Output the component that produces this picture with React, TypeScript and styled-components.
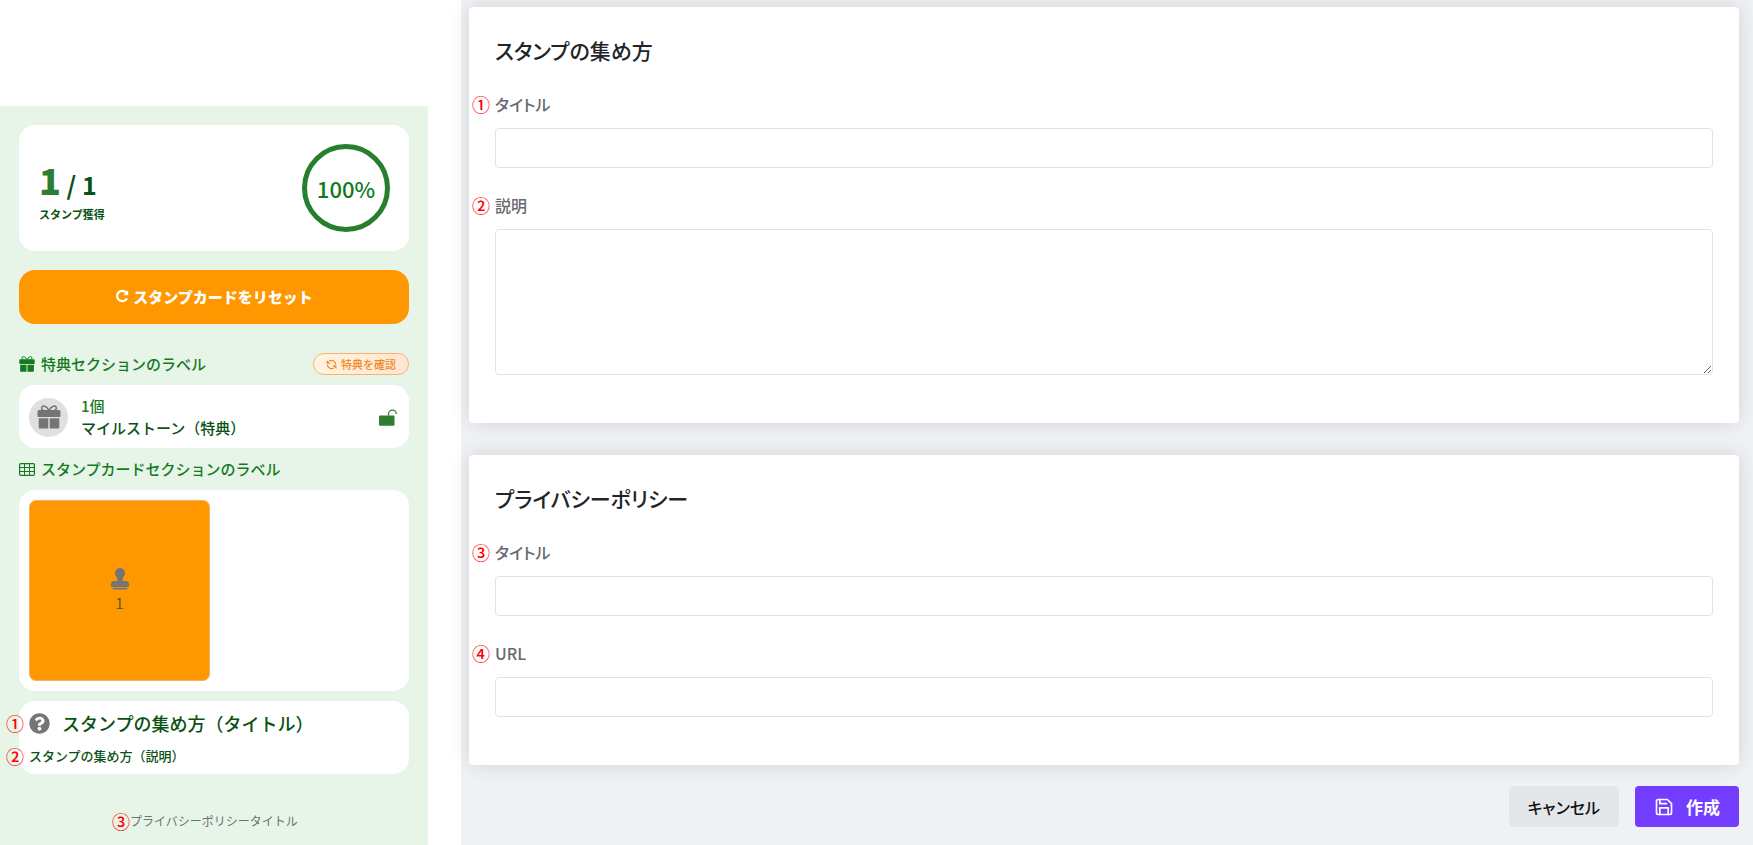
import React from "react";
import styled, { createGlobalStyle } from "styled-components";
import { FiSave } from "react-icons/fi";
import { FaQuestionCircle } from "react-icons/fa";

const GlobalStyle = createGlobalStyle`
  *, *::before, *::after { box-sizing: border-box; }
  body {
    margin: 0;
    background: #fff;
    font-family: "Noto Sans CJK JP", "Noto Sans", sans-serif;
  }
  h2, p { margin: 0; }
  button, input, textarea { font: inherit; }
`;

const Page = styled.div`
  display: flex;
  min-height: 100vh;
`;

/* ---------- shared ---------- */

const Marker = styled.span<{ $left: number }>`
  position: absolute;
  top: 50%;
  left: ${(p) => p.$left}px;
  transform: translateY(-50%);
  font-size: 18px;
  line-height: 18px;
  font-weight: 500;
  color: #ff0000;
`;

/* ---------- preview ---------- */

const Preview = styled.aside`
  flex: 0 0 428px;
  display: flex;
  flex-direction: column;
  margin-top: 106px;
  padding: 19px 19px 12px;
  background: #e6f5e8;
  color: #0a5214;
`;

const Card = styled.section`
  border-radius: 16px;
  background: #fff;
`;

const ProgressCard = styled(Card)`
  display: flex;
  align-items: center;
  justify-content: space-between;
  padding: 19px 19px 19px 20px;
`;

const Progress = styled.div`
  padding-top: 4px;
`;

const Count = styled.p`
  font-size: 25px;
  line-height: 40px;
  font-weight: 700;
`;

const CountNow = styled.span`
  font-size: 36px;
  font-weight: 900;
  color: #2e7d32;
`;

const CountLabel = styled.p`
  margin-top: 2px;
  font-size: 11px;
  line-height: 16px;
  font-weight: 700;
`;

const Ring = styled.div`
  display: grid;
  place-items: center;
  width: 88px;
  height: 88px;
  border: 5px solid #267f2d;
  border-radius: 50%;
  font-size: 22px;
  font-weight: 500;
  color: #127a1a;
`;

const ResetButton = styled.button`
  display: flex;
  align-items: center;
  justify-content: center;
  gap: 4px;
  height: 54px;
  margin-top: 19px;
  padding: 0 0 2px;
  border: 0;
  border-radius: 16px;
  background: #ff9800;
  color: #fff;
  font-size: 15px;
  font-weight: 900;
`;

const SectionHead = styled.div<{ $gap: number }>`
  display: flex;
  align-items: center;
  justify-content: space-between;
  height: 22px;
  margin-top: ${(p) => p.$gap}px;
`;

const SectionTitle = styled.h2`
  display: flex;
  align-items: center;
  gap: 6px;
  font-size: 15px;
  line-height: 22px;
  font-weight: 500;
  color: #157a1e;
`;

const Pill = styled.button`
  display: flex;
  align-items: center;
  gap: 4px;
  height: 22px;
  padding: 0 12px;
  border: 1px solid #fdb366;
  border-radius: 11px;
  background: linear-gradient(90deg, #fff3e0, #ffe6d3);
  color: #f28a24;
  font-size: 11px;
  line-height: 20px;
  font-weight: 500;
`;

const RewardCard = styled(Card)`
  display: flex;
  align-items: center;
  gap: 13px;
  margin-top: 10px;
  padding: 10px 12px 9px 10px;
`;

const RewardIcon = styled.div`
  display: grid;
  place-items: center;
  width: 39px;
  height: 39px;
  border-radius: 50%;
  background: #e0e0e0;
  color: #757575;
`;

const RewardText = styled.div`
  flex: 1;
  font-size: 15px;
  line-height: 22px;
  font-weight: 500;
`;

const RewardCount = styled.p`
  color: #1e7a27;
`;

const StampCard = styled(Card)`
  display: grid;
  grid-template-columns: 1fr 1fr;
  gap: 8px;
  margin-top: 10px;
  padding: 10px;
`;

const StampTile = styled.div`
  display: flex;
  flex-direction: column;
  align-items: center;
  justify-content: center;
  gap: 2px;
  aspect-ratio: 1;
  border: 1px solid #f3b169;
  border-radius: 7px;
  background: #ff9800;
  color: #4c6a13;
  font-size: 15px;
  line-height: 22px;
  font-weight: 400;
`;

const InfoCard = styled(Card)`
  margin-top: 10px;
  padding: 9px 10px 8px;
`;

const InfoTitle = styled.h2`
  position: relative;
  display: flex;
  align-items: center;
  gap: 12px;
  font-size: 18px;
  line-height: 26px;
  font-weight: 500;
  svg { color: #757575; }
`;

const InfoText = styled.p`
  position: relative;
  margin-top: 10px;
  font-size: 13px;
  line-height: 20px;
  font-weight: 500;
`;

const PolicyRow = styled.p`
  margin-top: 37px;
  text-align: center;
  font-size: 12px;
  line-height: 20px;
`;

const PolicyLink = styled.a`
  position: relative;
  color: #6b736c;
  font-weight: 400;
  text-decoration: none;
`;

/* ---------- form ---------- */

const FormArea = styled.form`
  flex: 1;
  min-width: 0;
  display: flex;
  flex-direction: column;
  gap: 32px;
  margin-left: 33px;
  padding: 7px 14px 17px 8px;
  background: #eff1f5;
`;

const Panel = styled.section`
  padding: 28px 26px 48px;
  border-radius: 4px;
  background: #fff;
  box-shadow: 0 0 20px rgba(0, 0, 0, 0.12);
  color: #212529;
`;

const PanelTitle = styled.h2`
  margin-bottom: 27px;
  font-size: 21px;
  line-height: 30px;
  font-weight: 500;
  font-feature-settings: "palt";
`;

const Field = styled.div`
  display: flex;
  flex-direction: column;
  gap: 12px;

  & + & {
    margin-top: 25px;
  }
`;

const Label = styled.label`
  position: relative;
  font-size: 16px;
  line-height: 24px;
  font-weight: 500;
  font-feature-settings: "palt";
  color: #666a70;
`;

const Input = styled.input`
  width: 100%;
  height: 40px;
  padding: 8px 12px;
  border: 1px solid #dfe2ea;
  border-radius: 4px;
  background: #fff;
`;

const TextArea = styled.textarea`
  display: block;
  width: 100%;
  height: 146px;
  padding: 8px 12px;
  border: 1px solid #dfe2ea;
  border-radius: 4px;
  background: #fff;
  resize: vertical;
`;

const Actions = styled.div`
  display: flex;
  justify-content: flex-end;
  gap: 16px;
  margin-top: -11px;
`;

const ActionButton = styled.button<{ $primary?: boolean }>`
  display: flex;
  align-items: center;
  justify-content: center;
  gap: 12px;
  height: 41px;
  padding: 0 19px;
  border: 0;
  border-radius: 4px;
  background: ${(p) => (p.$primary ? "#733dff" : "#e5e6ea")};
  color: ${(p) => (p.$primary ? "#fff" : "#111")};
  font-size: ${(p) => (p.$primary ? 17 : 16)}px;
  font-weight: ${(p) => (p.$primary ? 700 : 500)};
  font-feature-settings: "palt";
`;

/* ---------- icons ---------- */

const GiftIcon = ({ size }: { size: number }) => (
  <svg width={size} height={size} viewBox="0 0 24 24" fill="currentColor" aria-hidden="true">
    <path
      d="M12 5.6C10 .8 5.2-.2 4.6 2.6 4.3 4 5.6 5.2 7 5.4M12 5.6C14 .8 18.8-.2 19.4 2.6 19.7 4 18.4 5.2 17 5.4"
      fill="none"
      stroke="currentColor"
      strokeWidth="1.5"
    />
    <path d="M2 5h20a1.500 1.500 0 0 1 1.500 1.500V11a1 1 0 0 1-1 1h-21a1 1 0 0 1-1-1V6.500A1.500 1.500 0 0 1 2 5z" />
    <path d="M1.700 13.200h9.600V23.500H2.700a1 1 0 0 1-1-1zM12.700 13.200h9.600v9.300a1 1 0 0 1-1 1h-8.600z" />
  </svg>
);

const GridIcon = () => (
  <svg width="16" height="13" viewBox="0 0 16 13" fill="none" stroke="currentColor" aria-hidden="true">
    <rect x=".6" y=".6" width="14.8" height="11.8" rx="1.2" strokeWidth="1.2" />
    <path d="M5.500 .6v11.800M10.500 .6v11.800M.6 4.500h14.800M.6 8.500h14.800" />
  </svg>
);

const ReloadIcon = () => (
  <svg width="14" height="14" viewBox="0 0 14 14" aria-hidden="true">
    <path d="M11.400 3.800A5.200 5.200 0 1 0 11.900 9.400" fill="none" stroke="currentColor" strokeWidth="2.2" />
    <path d="M13.200 1v5.200H8z" fill="currentColor" />
  </svg>
);

const SyncIcon = () => (
  <svg width="11" height="11" viewBox="0 0 11 11" aria-hidden="true">
    <path
      d="M3 2.200A4.200 4.200 0 0 1 9.700 5.400M8 8.800A4.200 4.200 0 0 1 1.300 5.600"
      fill="none"
      stroke="currentColor"
      strokeWidth="1.3"
    />
    <path d="M.6 1v3.800h3.800zM10.400 10V6.200H6.600z" fill="currentColor" />
  </svg>
);

const UnlockIcon = () => (
  <svg width="18" height="17" viewBox="0 0 18 17" aria-hidden="true">
    <rect x="0" y="6.5" width="15.5" height="10.2" rx="1" fill="#2e7d32" />
    <path d="M9.500 6.500V5a3.900 3.900 0 0 1 7.800 0" fill="none" stroke="#2e7d32" strokeWidth="1.3" />
  </svg>
);

const StampIcon = () => (
  <svg width="18" height="22" viewBox="0 0 18 22" fill="#757575" aria-hidden="true">
    <path d="M9 0a5 5 0 0 1 5 5c0 2.200-1.100 3.200-1.900 4.600-.4.8-.5 1.600-.5 3.400H15a3 3 0 0 1 3 3v2.200a1 1 0 0 1-1 1H1a1 1 0 0 1-1-1V16a3 3 0 0 1 3-3h3.400c0-1.800-.1-2.600-.5-3.400C5.100 8.200 4 7.200 4 5a5 5 0 0 1 5-5z" />
    <path d="M1.500 20h15l-.6 1.500H2.100z" />
  </svg>
);

/* ---------- page ---------- */

export default function App() {
  return (
    <>
      <GlobalStyle />
      <Page>
        <Preview>
          <ProgressCard>
            <Progress>
              <Count>
                <CountNow>1</CountNow> / 1
              </Count>
              <CountLabel>スタンプ獲得</CountLabel>
            </Progress>
            <Ring>100%</Ring>
          </ProgressCard>

          <ResetButton type="button">
            <ReloadIcon />
            スタンプカードをリセット
          </ResetButton>

          <SectionHead $gap={29}>
            <SectionTitle>
              <GiftIcon size={16} />
              特典セクションのラベル
            </SectionTitle>
            <Pill type="button">
              <SyncIcon />
              特典を確認
            </Pill>
          </SectionHead>
          <RewardCard>
            <RewardIcon>
              <GiftIcon size={24} />
            </RewardIcon>
            <RewardText>
              <RewardCount>1個</RewardCount>
              <p>マイルストーン（特典）</p>
            </RewardText>
            <UnlockIcon />
          </RewardCard>

          <SectionHead $gap={10}>
            <SectionTitle>
              <GridIcon />
              スタンプカードセクションのラベル
            </SectionTitle>
          </SectionHead>
          <StampCard>
            <StampTile>
              <StampIcon />
              <span>1</span>
            </StampTile>
          </StampCard>

          <InfoCard>
            <InfoTitle>
              <Marker $left={-23}>①</Marker>
              <FaQuestionCircle size={21} />
              スタンプの集め方（タイトル）
            </InfoTitle>
            <InfoText>
              <Marker $left={-23}>②</Marker>
              スタンプの集め方（説明）
            </InfoText>
          </InfoCard>

          <PolicyRow>
            <PolicyLink href="#privacy">
              <Marker $left={-18}>③</Marker>
              プライバシーポリシータイトル
            </PolicyLink>
          </PolicyRow>
        </Preview>

        <FormArea>
          <Panel>
            <PanelTitle>スタンプの集め方</PanelTitle>
            <Field>
              <Label htmlFor="guide-title">
                <Marker $left={-23}>①</Marker>
                タイトル
              </Label>
              <Input id="guide-title" type="text" />
            </Field>
            <Field>
              <Label htmlFor="guide-text">
                <Marker $left={-23}>②</Marker>
                説明
              </Label>
              <TextArea id="guide-text" />
            </Field>
          </Panel>

          <Panel id="privacy">
            <PanelTitle>プライバシーポリシー</PanelTitle>
            <Field>
              <Label htmlFor="policy-title">
                <Marker $left={-23}>③</Marker>
                タイトル
              </Label>
              <Input id="policy-title" type="text" />
            </Field>
            <Field>
              <Label htmlFor="policy-url">
                <Marker $left={-23}>④</Marker>
                URL
              </Label>
              <Input id="policy-url" type="url" />
            </Field>
          </Panel>

          <Actions>
            <ActionButton type="button">キャンセル</ActionButton>
            <ActionButton type="submit" $primary>
              <FiSave size={20} />
              作成
            </ActionButton>
          </Actions>
        </FormArea>
      </Page>
    </>
  );
}
